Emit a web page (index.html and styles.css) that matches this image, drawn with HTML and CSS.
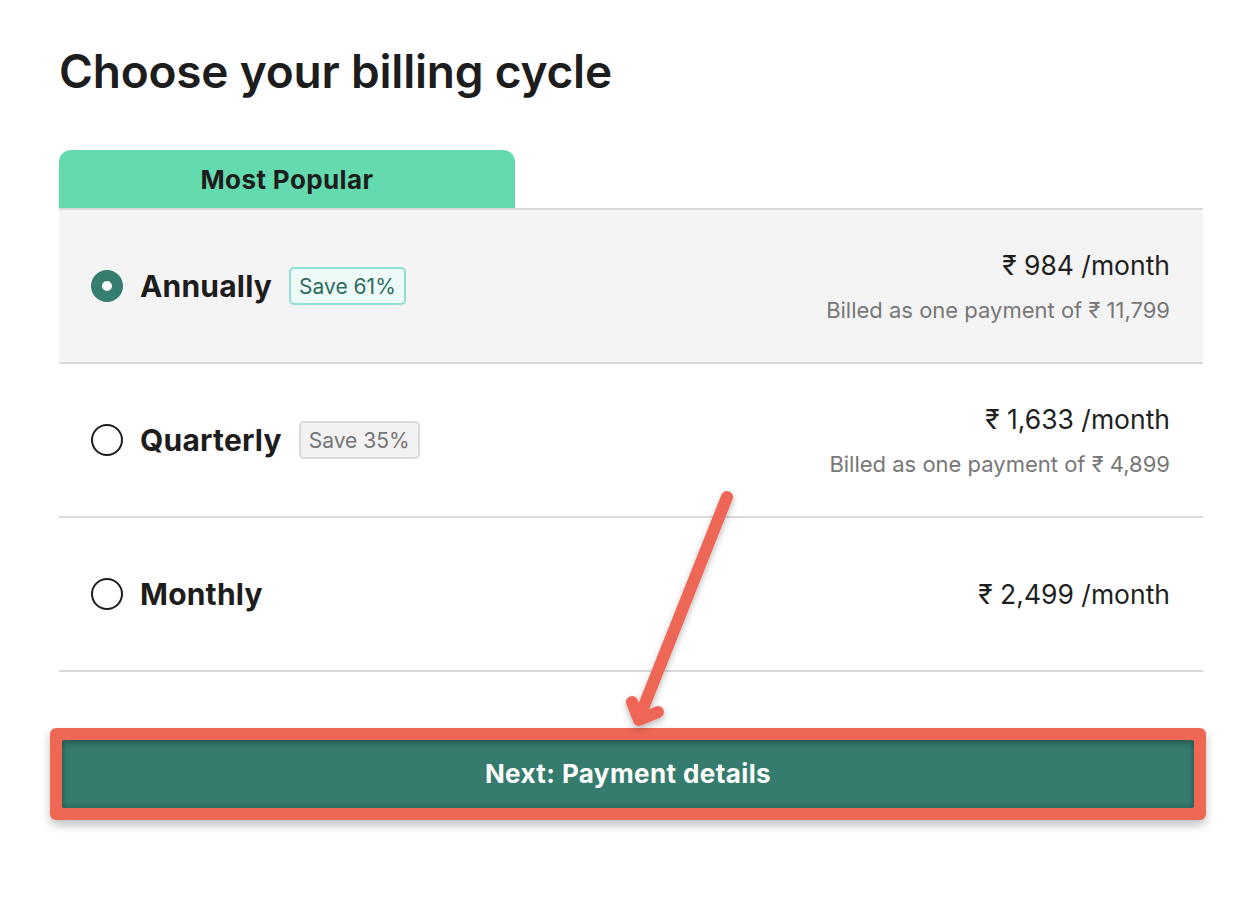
FILE: index.html
```html
<!DOCTYPE html>
<html lang="en">
<head>
<meta charset="utf-8">
<title>Choose your billing cycle</title>
<link rel="stylesheet" href="styles.css">
</head>
<body>
<main class="page">
  <h1 class="title">Choose your billing cycle</h1>
  <div class="tab">Most Popular</div>
  <div class="plans">
    <label class="plan plan-active">
      <span class="radio radio-on"></span>
      <span class="name">Annually</span>
      <span class="badge badge-green">Save 61%</span>
      <span class="price">
        <span class="amount">₹ 984 /month</span>
        <span class="billed">Billed as one payment of ₹ 11,799</span>
      </span>
    </label>
    <label class="plan">
      <span class="radio"></span>
      <span class="name">Quarterly</span>
      <span class="badge badge-grey">Save 35%</span>
      <span class="price">
        <span class="amount">₹ 1,633 /month</span>
        <span class="billed">Billed as one payment of ₹ 4,899</span>
      </span>
    </label>
    <label class="plan">
      <span class="radio"></span>
      <span class="name">Monthly</span>
      <span class="price">
        <span class="amount">₹ 2,499 /month</span>
      </span>
    </label>
  </div>
  <div class="highlight">
    <button class="next">Next: Payment details</button>
  </div>
</main>
<svg class="arrow" width="1260" height="908" viewBox="0 0 1260 908" aria-hidden="true">
  <defs>
    <filter id="sh" x="-20%" y="-20%" width="140%" height="140%">
      <feDropShadow dx="0" dy="3" stdDeviation="3" flood-color="#000" flood-opacity="0.28"/>
    </filter>
  </defs>
  <g filter="url(#sh)" stroke="#ee6654" stroke-width="12" stroke-linecap="round" stroke-linejoin="round" fill="none">
    <path d="M727 497 L640 716"/>
    <path d="M632 702 L639 720 L658 712"/>
  </g>
</svg>
</body>
</html>
```
FILE: styles.css
```css
* { box-sizing: border-box; }
html, body { margin: 0; padding: 0; background: #ffffff; }
body {
  position: relative;
  font-family: Inter, "Noto Sans", "Liberation Sans", sans-serif;
  color: #1f1f1f;
  width: 1260px;
  height: 908px;
  overflow: hidden;
}
.page {
  padding: 44px 57px 0 59px;
}
.title {
  margin: 0;
  font-size: 46px;
  font-weight: 600;
  letter-spacing: -0.2px;
  line-height: 54px;
  color: #1d1d1d;
}
.tab {
  margin-top: 52px;
  width: 456px;
  height: 58px;
  background: #63dbaf;
  border-radius: 12px 12px 0 0;
  display: flex;
  align-items: center;
  justify-content: center;
  font-size: 26px;
  font-weight: 700;
  letter-spacing: 0.4px;
  color: #1d1d1d;
}
.plans {
  width: 1144px;
  border-top: 2px solid #d9d9d9;
}
.plan {
  display: flex;
  align-items: center;
  height: 154px;
  padding: 0 33px 0 32px;
  border-bottom: 2px solid #dadada;
}
.plan-active { background: #f4f4f4; }
.radio {
  width: 32px;
  height: 32px;
  border-radius: 50%;
  border: 2.5px solid #1d1d1d;
  flex: none;
  margin-right: 17px;
}
.radio-on {
  border: 11px solid #357d6f;
  background: #ffffff;
}
.name {
  font-size: 30px;
  font-weight: 700;
  color: #1d1d1d;
  letter-spacing: 0.2px;
}
.badge {
  margin-left: 17px;
  height: 38px;
  padding: 0 8px;
  border-radius: 5px;
  font-size: 21px;
  display: flex;
  align-items: center;
}
.badge-green {
  border: 2px solid #8fe0d5;
  background: #eefaf8;
  color: #2d6b5e;
}
.badge-grey {
  border: 2px solid #d9d9d9;
  background: #f2f2f2;
  color: #767676;
}
.price {
  margin-left: auto;
  display: flex;
  flex-direction: column;
  align-items: flex-end;
  gap: 15px;
}
.amount {
  font-size: 26.5px;
  color: #1f1f1f;
  line-height: 32px;
}
.billed {
  font-size: 22px;
  color: #777777;
  line-height: 28px;
}
.highlight {
  margin: 56px 0 0 -9px;
  width: 1156px;
  padding: 12px;
  background: #ee6654;
  border-radius: 6px;
  box-shadow: 0 5px 10px rgba(0, 0, 0, 0.25);
}
.next {
  display: block;
  width: 100%;
  height: 68px;
  padding: 0 0 2px;
  border: none;
  border-radius: 2px;
  background: #357b6e;
  color: #ffffff;
  font-family: inherit;
  font-size: 26px;
  font-weight: 700;
  letter-spacing: 0.4px;
  box-shadow: inset 0 3px 6px rgba(0, 0, 0, 0.3), inset 0 -2px 4px rgba(0,0,0,0.12);
}
.arrow {
  position: absolute;
  left: 0;
  top: 0;
  pointer-events: none;
}
```
